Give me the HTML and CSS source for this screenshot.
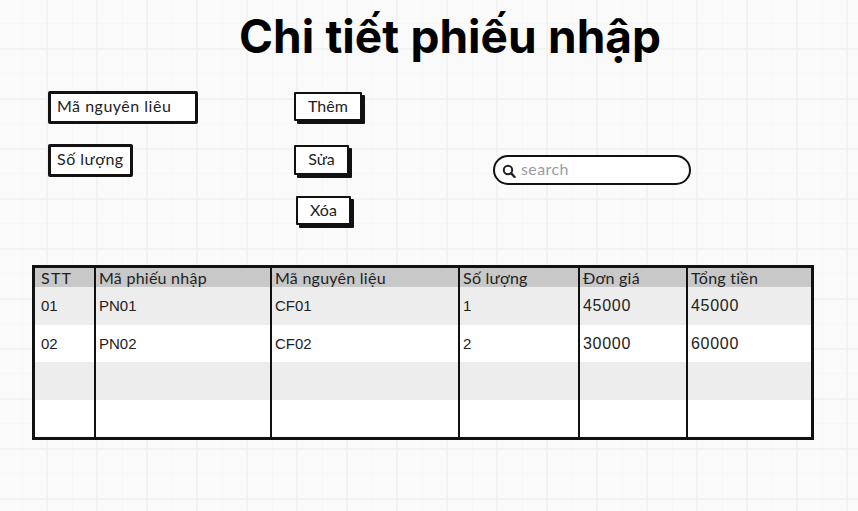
FILE: index.html
```html
<!DOCTYPE html>
<html lang="en">
<head>
    <meta charset="UTF-8">
    <meta name="viewport" content="width=device-width, initial-scale=1.0">
    <title>Chi tiết phiếu nhập</title>
    <link rel="stylesheet" href="styles.css">
</head>
<body>
    <h1 class="title">Chi tiết phiếu nhập</h1>

    <div class="form-area">
        <div class="fields">
            <div class="field field-code">Mã nguyên liêu</div>
            <div class="field field-qty">Số lượng</div>
        </div>
        <div class="buttons">
            <div class="btn btn-add">Thêm</div>
            <div class="btn btn-edit">Sửa</div>
            <div class="btn btn-del">Xóa</div>
        </div>
        <div class="search">
            <svg class="search-icon" width="14" height="14" viewBox="0 0 14 14">
                <circle cx="6" cy="6" r="4.2" fill="none" stroke="#222" stroke-width="2"/>
                <path d="M9 9.2 L12.6 13" fill="none" stroke="#222" stroke-width="2.4" stroke-linecap="round"/>
            </svg>
            <span class="search-text">search</span>
        </div>
    </div>

    <table class="detail-table">
        <colgroup>
            <col class="col-stt">
            <col class="col-receipt">
            <col class="col-material">
            <col class="col-qty">
            <col class="col-price">
            <col class="col-total">
        </colgroup>
        <thead>
            <tr>
                <th class="stt">STT</th>
                <th>Mã phiếu nhập</th>
                <th>Mã nguyên liệu</th>
                <th>Số lượng</th>
                <th>Đơn giá</th>
                <th>Tổng tiền</th>
            </tr>
        </thead>
        <tbody>
            <tr>
                <td>01</td>
                <td>PN01</td>
                <td>CF01</td>
                <td>1</td>
                <td class="money">45000</td>
                <td class="money">45000</td>
            </tr>
            <tr>
                <td>02</td>
                <td>PN02</td>
                <td>CF02</td>
                <td>2</td>
                <td class="money">30000</td>
                <td class="money">60000</td>
            </tr>
            <tr>
                <td></td><td></td><td></td><td></td><td></td><td></td>
            </tr>
            <tr>
                <td></td><td></td><td></td><td></td><td></td><td></td>
            </tr>
        </tbody>
    </table>
</body>
</html>
```

FILE: styles.css
```css
html, body {
    height: 100%;
}

body {
    margin: 0;
    overflow: hidden;
    color: #222;
    font-family: 'Lato', sans-serif;
    background-color: #fafafa;
    background-image:
        linear-gradient(to right, #f2f2f2 2px, transparent 2px),
        linear-gradient(to bottom, #f2f2f2 2px, transparent 2px),
        linear-gradient(to right, #f6f6f6 1px, transparent 1px),
        linear-gradient(to bottom, #f6f6f6 1px, transparent 1px);
    background-size: 50px 50px, 50px 50px, 25px 25px, 25px 25px;
    background-position: -4px -2px, 0 -2px, -3px 0, 0 -2px;
}

.title {
    margin: 0;
    padding-top: 6px;
    padding-left: 42px;
    height: 80px;
    box-sizing: border-box;
    text-align: center;
    font-family: 'Inter', sans-serif;
    font-size: 46px;
    font-weight: 700;
    line-height: 60px;
    word-spacing: 0.5px;
    color: #000;
}

.form-area {
    display: flex;
    align-items: flex-start;
    height: 185px;
    padding: 11px 0 0 48px;
    box-sizing: border-box;
}

.fields {
    display: flex;
    flex-direction: column;
    align-items: flex-start;
    gap: 20px;
    width: 246px;
}

.field {
    box-sizing: border-box;
    height: 33px;
    padding: 2px 6px 0 6px;
    background: #fff;
    border: 3px solid #111;
    border-radius: 2px;
    font-size: 16px;
    letter-spacing: 0.5px;
    line-height: 20px;
    white-space: nowrap;
}

.field-code {
    width: 150px;
}

.field-qty {
    width: 85px;
}

.buttons {
    display: flex;
    flex-direction: column;
    align-items: flex-start;
    width: 199px;
    padding-top: 1px;
}

.btn {
    box-sizing: border-box;
    height: 29px;
    background: #fff;
    border: 2px solid #111;
    border-radius: 1px;
    box-shadow: 3px 3px 0 #111;
    text-align: center;
    font-size: 16px;
    line-height: 24px;
}

.btn-add {
    width: 68px;
}

.btn-edit {
    width: 55px;
    height: 30px;
    margin-top: 24px;
}

.btn-del {
    width: 55px;
    margin-top: 21px;
    margin-left: 2px;
}

.search {
    display: flex;
    align-items: center;
    gap: 5px;
    box-sizing: border-box;
    width: 198px;
    height: 30px;
    margin-top: 64px;
    padding: 0 0 0 7px;
    background: #fff;
    border: 2px solid #111;
    border-radius: 15px;
}

.search-icon {
    margin-top: 2px;
}

.search-text {
    margin-top: -4px;
    font-size: 16px;
    letter-spacing: 0.4px;
    color: #9a9aa2;
}

.detail-table {
    width: 782px;
    margin-left: 32px;
    table-layout: fixed;
    border-collapse: separate;
    border-spacing: 0;
    background: #fff;
    border: 3px solid #111;
}

.col-stt { width: 59px; }
.col-receipt { width: 176px; }
.col-material { width: 188px; }
.col-qty { width: 120px; }
.col-price { width: 108px; }
.col-total { width: 125px; }

.detail-table th,
.detail-table td {
    padding: 0 0 0 3px;
    border-left: 2px solid #111;
    text-align: left;
    vertical-align: top;
    color: #222;
    box-sizing: border-box;
}

.detail-table th:first-child,
.detail-table td:first-child {
    border-left: 0;
    padding-left: 6px;
}

.detail-table th {
    height: 19px;
    background: #c8c8c8;
    font-size: 16px;
    font-weight: 400;
    letter-spacing: 0.25px;
    line-height: 19px;
}

.detail-table th.stt {
    letter-spacing: 1.2px;
}

.detail-table td {
    height: 37.5px;
    padding-top: 9px;
    font-family: 'Liberation Sans', sans-serif;
    font-size: 15px;
    line-height: 19px;
}

.detail-table td.money {
    font-size: 16px;
    letter-spacing: 0.7px;
}

.detail-table tbody tr:nth-child(odd) {
    background: #ededed;
}
```
